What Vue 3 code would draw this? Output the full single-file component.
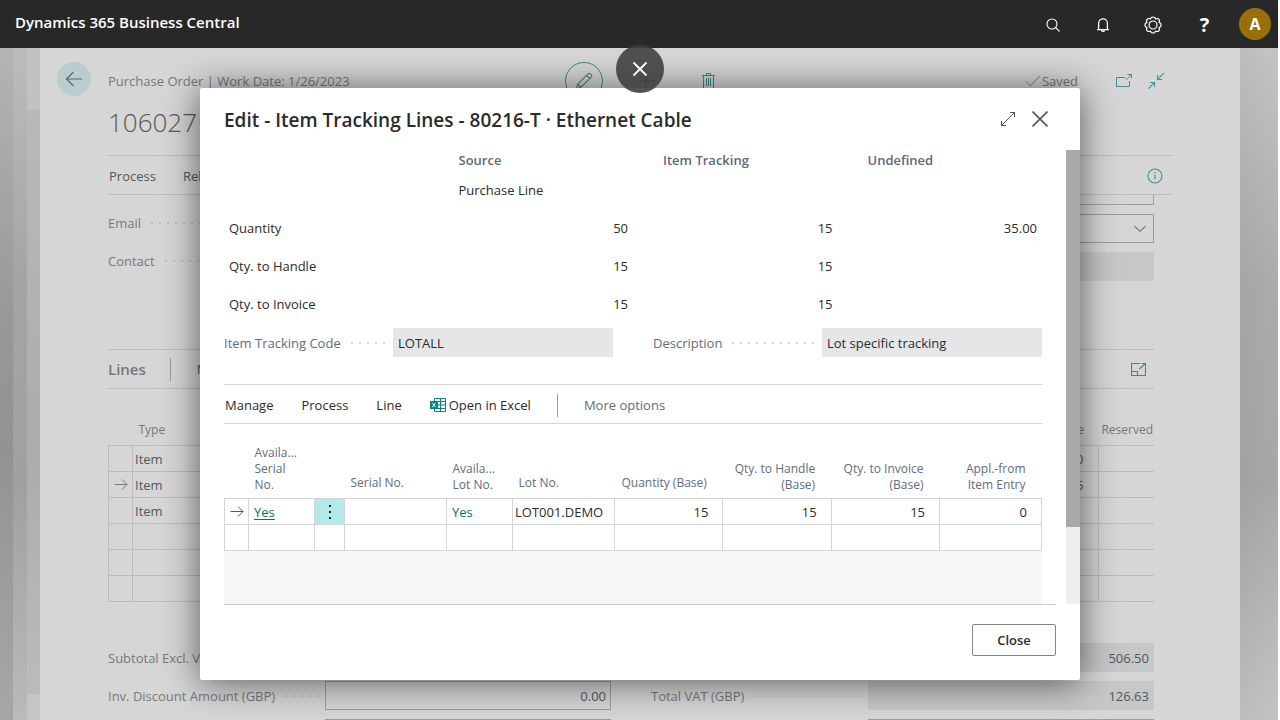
<script setup>
const summaryRows = [
  { label: 'Quantity', source: '50', tracking: '15', undefinedQty: '35.00' },
  { label: 'Qty. to Handle', source: '15', tracking: '15', undefinedQty: '' },
  { label: 'Qty. to Invoice', source: '15', tracking: '15', undefinedQty: '' },
]

const orderLines = [
  { type: 'Item', value: '10', current: false },
  { type: 'Item', value: '15', current: true },
  { type: 'Item', value: '', current: false },
  { type: '', value: '', current: false },
  { type: '', value: '', current: false },
  { type: '', value: '', current: false },
]
</script>

<template>
  <div class="app">
    <header class="topbar">
      <span class="brand">Dynamics 365 Business Central</span>
      <nav class="topbar-tools">
        <button class="tool" aria-label="Search">
          <svg width="16" height="16" viewBox="0 0 16 16" fill="none" stroke="#fff" stroke-width="1.1">
            <circle cx="7" cy="7" r="5" /><path d="M10.7 10.7 14.5 14.5" />
          </svg>
        </button>
        <button class="tool" aria-label="Notifications">
          <svg width="16" height="16" viewBox="0 0 16 16" fill="none" stroke="#fff" stroke-width="1.3">
            <path d="M3.6 12.4V6.2a4.4 4.4 0 0 1 8.8 0v6.2M2 12.6h12M6.5 13a1.5 1.5 0 0 0 3 0" />
          </svg>
        </button>
        <button class="tool" aria-label="Settings">
          <svg width="18" height="18" viewBox="0 0 18 18" fill="none" stroke="#fff" stroke-width="1.2">
            <path d="M7.2 1.600Q9 .4 10.800 1.600L11.500 2.900 13 2.500Q15.500 2.600 15.500 5L15.100 6.500 16.400 7.200Q17.600 9 16.400 10.800L15.100 11.500 15.500 13Q15.500 15.500 13 15.500L11.500 15.100 10.800 16.400Q9 17.600 7.200 16.400L6.500 15.100 5 15.500Q2.500 15.500 2.500 13L2.900 11.500 1.600 10.800Q.4 9 1.600 7.200L2.900 6.500 2.500 5Q2.500 2.500 5 2.500L6.500 2.900Z" />
            <circle cx="9" cy="9" r="4" />
          </svg>
        </button>
        <button class="tool help" aria-label="Help">?</button>
        <button class="avatar" aria-label="Account">A</button>
      </nav>
    </header>

    <div class="workspace">
      <div class="stack stack-a"></div>
      <div class="stack stack-b"></div>
      <div class="stack stack-c"></div>

      <main class="page">
        <button class="back" aria-label="Back">
          <svg width="18" height="18" viewBox="0 0 18 18" fill="none" stroke="#5f6668" stroke-width="1.2">
            <path d="M17 9H1.5M8.5 2 1.5 9l7 7" />
          </svg>
        </button>

        <div class="document">
          <div class="doc-head">
            <span class="crumb">Purchase Order | Work Date: 1/26/2023</span>
            <div class="doc-actions">
              <button class="round" aria-label="Edit">
                <svg width="20" height="20" viewBox="0 0 20 20" fill="none" stroke="#3d888b" stroke-width="1.1">
                  <path d="M2.5 17.5 3.8 13 14 2.8a1.6 1.6 0 0 1 2.3 0l1 1a1.6 1.6 0 0 1 0 2.3L7 16.2ZM12.5 4.3l3.2 3.2M3.8 13 7 16.2" />
                </svg>
              </button>
              <button class="plain" aria-label="New">
                <svg width="18" height="18" viewBox="0 0 18 18" fill="none" stroke="#0f6a6d" stroke-width="1.4">
                  <path d="M1 9h16M9 1v16" />
                </svg>
              </button>
              <button class="plain" aria-label="Delete">
                <svg width="15" height="18" viewBox="0 0 15 18" fill="none" stroke="#3d888b" stroke-width="1">
                  <path d="M1 3.5h13M5.5 3.5v-2h4v2M2.500 3.5v13.5h10V3.5M5.500 6v8M7.500 6v8M9.500 6v8" />
                </svg>
              </button>
            </div>
            <div class="doc-status">
              <span class="saved">
                <svg width="16" height="12" viewBox="0 0 16 12" fill="none" stroke="#77797c" stroke-width="1">
                  <path d="M1 6.5 5.3 10.8 15 1" />
                </svg>
                Saved
              </span>
              <button class="plain-icon" aria-label="Open in new window">
                <svg width="16" height="14" viewBox="0 0 16 14" fill="none" stroke="#3f8f98" stroke-width="1">
                  <path d="M9.500 3.5H.5v9h13V7M10 6 15 1M11.5.5H15.500v4" />
                </svg>
              </button>
              <button class="plain-icon" aria-label="Collapse">
                <svg width="16" height="16" viewBox="0 0 16 16" fill="none" stroke="#3f8f98" stroke-width="1.1">
                  <path d="M15.7.3 9.8 6.2M9.5 2v4.500H14M.3 15.7 6.4 9.6M2 9.5h4.5V14" />
                </svg>
              </button>
            </div>
          </div>

          <h1 class="doc-title">106027</h1>

          <div class="doc-menu">
            <button class="menu-item">Process</button>
            <button class="menu-item">Release</button>
            <button class="plain-icon info" aria-label="Details">
              <svg width="16" height="16" viewBox="0 0 16 16" fill="none" stroke="#3f8f98" stroke-width="1.1">
                <circle cx="8" cy="8" r="7" /><path d="M8 6.8v4.6M8 4.3v1.3" />
              </svg>
            </button>
          </div>

          <div class="doc-body">
            <section class="general">
              <div class="form-column contact-column">
                <label class="field-label" for="email">Email<i class="dots"></i></label>
                <input id="email" class="box" />
                <label class="field-label" for="contact">Contact<i class="dots"></i></label>
                <input id="contact" class="box" />
              </div>
              <div class="form-column">
                <input class="box cut" aria-label="Vendor order" />
                <div class="select-wrap">
                  <select class="box" aria-label="Purchaser"><option></option></select>
                  <svg width="12" height="8" viewBox="0 0 12 8" fill="none" stroke="#77787a" stroke-width="1.1">
                    <path d="M.5 1 6 6.5 11.500 1" />
                  </svg>
                </div>
                <input class="box filled" readonly aria-label="Status" />
              </div>
            </section>

            <div class="lines-head">
              <h2>Lines</h2>
              <span class="rule"></span>
              <button class="menu-item">Manage</button>
              <button class="plain-icon expand" aria-label="Expand lines">
                <svg width="15" height="13" viewBox="0 0 15 13" fill="none" stroke="#3d888b" stroke-width="1.1">
                  <path d="M9 .5H.5v12h14V5M.5 8.500h6v4M8.300 6 14 1M10.500.5h4v4" />
                </svg>
              </button>
            </div>

            <table class="order-lines">
              <colgroup><col class="c-mark" /><col /><col /><col class="c-last" /></colgroup>
              <thead>
                <tr><th></th><th class="left">Type</th><th class="num">Due Date</th><th class="num tight">Reserved</th></tr>
              </thead>
              <tbody>
                <tr v-for="(line, i) in orderLines" :key="i">
                  <td class="mark">
                    <svg v-if="line.current" width="14" height="12" viewBox="0 0 14 12" fill="none" stroke="#77787a" stroke-width="1">
                      <path d="M.5 5.500h12.500M8 .5l5 5-5 5" />
                    </svg>
                  </td>
                  <td class="type">{{ line.type }}</td>
                  <td class="num">{{ line.value }}</td>
                  <td></td>
                </tr>
              </tbody>
            </table>

            <section class="totals">
              <div class="form-column">
                <label class="field-label" for="sub">Subtotal Excl. VAT<i class="dots"></i></label>
                <input id="sub" class="box filled" readonly />
                <label class="field-label" for="disc">Inv. Discount Amount (GBP)<i class="dots"></i></label>
                <input id="disc" class="box" value="0.00" />
                <input class="box" aria-label="Invoice discount percent" />
              </div>
              <div class="form-column">
                <input class="box filled" readonly value="506.50" aria-label="Total Excl. VAT" />
                <label class="field-label" for="vat">Total VAT (GBP)<i class="dots"></i></label>
                <input id="vat" class="box filled" readonly value="126.63" />
                <input class="box" aria-label="Total including VAT" />
              </div>
            </section>
          </div>
        </div>
      </main>
      <div class="edge"></div>
    </div>

    <div class="overlay">
      <section class="dialog" role="dialog" aria-labelledby="dialog-title">
        <header class="dialog-head">
          <h2 id="dialog-title">Edit - Item Tracking Lines - 80216-T · Ethernet Cable</h2>
          <button class="plain-icon" aria-label="Maximize">
            <svg width="16" height="16" viewBox="0 0 16 16" fill="none" stroke="#555" stroke-width="1">
              <path d="M1 15 15 1M10 1.500h4.500V6M1.500 10v4.500H6" />
            </svg>
          </button>
          <button class="plain-icon" aria-label="Close dialog">
            <svg width="16" height="16" viewBox="0 0 16 16" fill="none" stroke="#555" stroke-width="1.6">
              <path d="M.5.5 15.500 15.500M15.500.5.5 15.500" />
            </svg>
          </button>
        </header>

        <div class="dialog-scroll">
          <div class="dialog-body">
            <table class="summary">
              <thead>
                <tr><th></th><th>Source</th><th>Item Tracking</th><th>Undefined</th></tr>
              </thead>
              <tbody>
                <tr class="kind"><td></td><td class="text">Purchase Line</td><td></td><td></td></tr>
                <tr v-for="row in summaryRows" :key="row.label">
                  <td class="name">{{ row.label }}</td>
                  <td>{{ row.source }}</td>
                  <td>{{ row.tracking }}</td>
                  <td>{{ row.undefinedQty }}</td>
                </tr>
              </tbody>
            </table>

            <div class="codes">
              <label class="field-label" for="code">Item Tracking Code<i class="dots"></i></label>
              <input id="code" readonly value="LOTALL" />
              <label class="field-label other" for="desc">Description<i class="dots"></i></label>
              <input id="desc" readonly value="Lot specific tracking" />
            </div>

            <div class="actions">
              <button class="menu-item">Manage</button>
              <button class="menu-item">Process</button>
              <button class="menu-item">Line</button>
              <button class="menu-item excel">
                <svg width="16" height="14" viewBox="0 0 16 14" fill="none" stroke="#0a8387" stroke-width="1">
                  <path d="M4.500 3V.5h11v13h-11V11M4.500 3.500h11M4.500 7h11M4.500 10.500h11M10.500.5v13" />
                  <path d="M0 3h8v8H0z" fill="#0a8387" stroke="none" />
                  <path d="M2.300 4.800 5.500 9.200M5.500 4.800 2.300 9.200" stroke="#fff" />
                </svg>
                Open in Excel
              </button>
              <span class="rule"></span>
              <button class="menu-item more">More options</button>
            </div>

            <table class="tracking">
              <colgroup>
                <col class="w-mark" /><col class="w-short" /><col class="w-dots" /><col class="w-mid" /><col class="w-short" />
                <col class="w-mid" /><col /><col /><col /><col class="w-mid" />
              </colgroup>
              <thead>
                <tr>
                  <th></th>
                  <th>Availa...<br />Serial<br />No.</th>
                  <th></th>
                  <th class="single">Serial No.</th>
                  <th>Availa...<br />Lot No.</th>
                  <th class="single">Lot No.</th>
                  <th class="num single">Quantity (Base)</th>
                  <th class="num">Qty. to Handle<br />(Base)</th>
                  <th class="num">Qty. to Invoice<br />(Base)</th>
                  <th class="num">Appl.-from<br />Item Entry</th>
                </tr>
              </thead>
              <tbody>
                <tr>
                  <td class="mark">
                    <svg width="14" height="12" viewBox="0 0 14 12" fill="none" stroke="#555" stroke-width="1">
                      <path d="M.5 5.500h12.500M8 .5l5 5-5 5" />
                    </svg>
                  </td>
                  <td><a class="current" href="#">Yes</a></td>
                  <td class="menu">
                    <button aria-label="Row menu">
                      <svg width="4" height="16" viewBox="0 0 4 16" fill="#222">
                        <path d="M1 1h2v2H1zM1 7h2v2H1zM1 13h2v2H1z" />
                      </svg>
                    </button>
                  </td>
                  <td></td>
                  <td><a href="#">Yes</a></td>
                  <td class="lot">LOT001.DEMO</td>
                  <td class="num">15</td>
                  <td class="num">15</td>
                  <td class="num">15</td>
                  <td class="num">0</td>
                </tr>
                <tr><td v-for="n in 10" :key="n"></td></tr>
              </tbody>
            </table>
            <div class="filler"></div>
          </div>
          <div class="scrollbar"><div class="thumb"></div></div>
        </div>

        <footer class="dialog-foot">
          <button class="close">Close</button>
        </footer>
      </section>

      <button class="dismiss" aria-label="Dismiss">
        <svg width="16" height="16" viewBox="0 0 16 16" fill="none" stroke="#fff" stroke-width="1.8">
          <path d="M1.500 1.500 14.500 14.500M14.500 1.500 1.500 14.500" />
        </svg>
      </button>
    </div>
  </div>
</template>

<style>
body {
  margin: 0;
  background: #fff;
}
</style>

<style scoped>
.app {
  position: relative;
  display: flex;
  flex-direction: column;
  height: 100vh;
  padding-right: 2px;
  box-sizing: border-box;
  overflow: hidden;
  font-family: "Open Sans", "Noto Sans", sans-serif;
  font-size: 13px;
  line-height: 18px;
  color: #2b2b2b;
}
button, input, select {
  font: inherit;
  color: inherit;
  margin: 0;
  padding: 0;
  border: 0;
  border-radius: 0;
  background: none;
  box-sizing: border-box;
  min-width: 0;
}
svg {
  display: block;
  flex: none;
}
table {
  width: 100%;
  border-collapse: collapse;
  table-layout: fixed;
}
th, td {
  padding: 0;
  font-weight: 400;
  white-space: nowrap;
}

.topbar {
  display: flex;
  align-items: center;
  justify-content: space-between;
  flex: 0 0 48px;
  padding: 0 7px 0 15px;
  background: #282828;
  color: #fff;
}
.brand {
  font-size: 15px;
  font-weight: 600;
  padding-bottom: 4px;
}
.topbar-tools {
  display: flex;
  align-items: center;
}
.tool {
  display: flex;
  align-items: center;
  justify-content: center;
  width: 50px;
  height: 48px;
  padding-top: 2px;
}
.help {
  width: 53px;
  font-size: 20px;
  font-weight: 700;
}
.avatar {
  width: 32px;
  height: 32px;
  margin-left: 8px;
  border-radius: 50%;
  background: #986f0b;
  font-size: 16px;
  font-weight: 700;
}

.workspace {
  display: flex;
  flex: 1;
  min-height: 0;
}
.stack {
  flex: 0 0 13px;
}
.stack-a {
  background: linear-gradient(100deg, transparent 40%, rgba(0, 0, 0, 0.06)), linear-gradient(#b4b4b4, #989898 40%, #959595 60%, #b0b0b0);
}
.stack-b {
  flex-basis: 14px;
  background: linear-gradient(#bcbcbc, #a4a4a4 35%, #a0a0a0 65%, #bababa);
}
.stack-c {
  background: linear-gradient(#c2c2c2 0 62px, #b8baba 62px, #b0b2b2 40%, #abacac 60%, #bbb 646px, #c5c5c5 646px);
}
.edge {
  flex: 0 0 38px;
  background: linear-gradient(90deg, rgba(0, 0, 0, 0.04), transparent), linear-gradient(#c4c4c4, #acacac 35%, #a8a8a8 65%, #c4c4c4);
}

.page {
  flex: 1;
  display: grid;
  grid-template-columns: 34px minmax(0, 1fr);
  column-gap: 17px;
  align-items: start;
  padding: 14px 68px 0 17px;
  background: #d6d6d6;
  color: #55565a;
  overflow: hidden;
}
.back {
  display: flex;
  align-items: center;
  justify-content: center;
  width: 34px;
  height: 34px;
  border-radius: 50%;
  background: #bacccd;
}
.doc-head {
  display: grid;
  grid-template-columns: 1fr auto 1fr;
  align-items: center;
  height: 38px;
}
.crumb, .saved {
  color: #75767b;
}
.doc-actions {
  display: flex;
  gap: 24px;
  padding-left: 12px;
}
.round, .plain {
  display: flex;
  align-items: center;
  justify-content: center;
  width: 38px;
  height: 38px;
}
.round {
  border: 1px solid #3d888b;
  border-radius: 50%;
}
.doc-status {
  display: flex;
  align-items: center;
  justify-content: flex-end;
  padding-right: 8px;
}
.saved {
  display: flex;
  align-items: center;
  gap: 1px;
  margin-right: 38px;
}
.plain-icon + .plain-icon {
  margin-left: 16px;
}
.doc-title {
  margin: 0;
  height: 55px;
  padding-top: 3px;
  box-sizing: border-box;
  font-size: 26px;
  line-height: 38px;
  font-weight: 300;
}
.doc-menu {
  display: flex;
  align-items: center;
  gap: 27px;
  height: 40px;
  box-sizing: border-box;
  padding: 1px 9px 0 1px;
  border: solid #bcbcbc;
  border-width: 1px 0;
}
.info, .expand {
  margin-left: auto;
}
.doc-body {
  padding-right: 18px;
}
.general, .totals {
  display: grid;
  grid-template-columns: 1fr 1fr;
  column-gap: 40px;
  align-items: start;
}
.form-column {
  display: grid;
  grid-template-columns: 217fr 286fr;
  row-gap: 9px;
}
.general {
  padding-bottom: 68px;
}
.contact-column {
  padding-top: 13px;
}
.form-column .box, .select-wrap {
  grid-column: 2;
}
.box {
  width: 100%;
  height: 29px;
  padding: 1px 4px 0;
  border: 1px solid #9d9d9d;
  text-align: right;
}
.cut {
  height: 10px;
  border-top: 0;
}
.filled {
  border-color: #c6c7c8;
  background: #c6c7c8;
}
.select-wrap {
  display: grid;
  align-items: center;
  justify-items: end;
}
.select-wrap > .box, .select-wrap > svg {
  grid-area: 1 / 1;
}
.select-wrap select {
  appearance: none;
}
.select-wrap svg {
  margin-right: 8px;
  pointer-events: none;
}
.field-label {
  display: flex;
  align-items: center;
  color: #77787d;
  white-space: nowrap;
}
.totals .field-label {
  padding-top: 1px;
}
.dots {
  flex: 1;
  height: 2px;
  margin: 0 6px 0 10px;
  background: repeating-linear-gradient(90deg, #bdbdbd 0 2px, transparent 2px 8px);
}
.lines-head {
  display: flex;
  align-items: center;
  height: 40px;
  padding-right: 8px;
  box-sizing: border-box;
  border: solid #bcbcbc;
  border-width: 1px 0;
}
.lines-head h2 {
  margin: 0;
  font-size: 15px;
  font-weight: 600;
  color: #75767b;
}
.rule {
  width: 1px;
  height: 23px;
  background: #99a1ab;
  margin: 0 26px;
}
.lines-head .rule {
  margin-left: 24px;
  background: #999;
}
.order-lines th {
  height: 56px;
  padding-bottom: 7px;
  box-sizing: border-box;
  vertical-align: bottom;
  font-size: 12px;
  line-height: 16px;
  color: #75767b;
}
.order-lines td {
  height: 23px;
  padding-top: 2px;
  border: 1px solid #bcbcbc;
}
.order-lines td:last-child {
  border-right: 0;
}
.order-lines .left {
  text-align: left;
  padding-left: 6px;
}
.order-lines .type {
  padding-left: 2px;
}
.order-lines .num {
  text-align: right;
  padding-right: 14px;
}
.order-lines .tight {
  padding-right: 1px;
}
.c-mark, .w-mark {
  width: 24px;
}
.c-last {
  width: 56px;
}
.mark svg {
  margin: 0 auto;
}
.totals {
  margin-top: 41px;
}

.overlay {
  position: absolute;
  inset: 88px 2px 40px 0;
  display: flex;
  justify-content: center;
  align-items: stretch;
}
.dialog {
  display: flex;
  flex-direction: column;
  width: 880px;
  max-width: 90%;
  margin-left: 2px;
  background: #fff;
  border-radius: 2px;
  box-shadow: 0 2px 36px rgba(0, 0, 0, 0.6);
}
.dialog-head {
  display: flex;
  align-items: center;
  height: 62px;
  padding: 0 32px 0 24px;
  box-sizing: border-box;
}
.dialog-head h2 {
  flex: 1;
  margin: 0;
  padding-top: 2px;
  font-size: 19px;
  line-height: 26px;
  font-weight: 600;
}
.dialog-scroll {
  display: flex;
  flex: 1;
  min-height: 0;
}
.dialog-body {
  flex: 1;
  min-width: 0;
  display: flex;
  flex-direction: column;
  padding: 0 24px;
  overflow: hidden;
}
.scrollbar {
  width: 14px;
  background: #eee;
}
.thumb {
  height: 83%;
  background: #a9a9a9;
}
.summary th {
  height: 20px;
  padding-left: 30px;
  text-align: left;
  font-weight: 600;
  color: #5f6878;
}
.summary td {
  height: 38px;
  padding-right: 5px;
  text-align: right;
}
.summary .kind td {
  height: 39px;
}
.summary .text {
  padding-left: 30px;
  text-align: left;
}
.summary .name {
  padding-left: 5px;
  text-align: left;
}
.codes {
  display: grid;
  grid-template-columns: 169fr 220px 209fr 220px;
  margin: 5px 0 27px;
}
.codes .field-label, .more {
  color: #626c7c;
}
.codes .dots {
  background: repeating-linear-gradient(90deg, #d4d6d9 0 2px, transparent 2px 8px);
}
.codes .other {
  margin-left: 40px;
}
.codes input {
  height: 29px;
  padding: 0 5px;
  background: #e5e6e8;
}
.actions {
  display: flex;
  align-items: center;
  flex: none;
  height: 40px;
  padding: 2px 0 0 1px;
  box-sizing: border-box;
  border: solid #d2d4d8;
  border-width: 1px 0;
}
.actions .menu-item + .menu-item {
  margin-left: 28px;
}
.excel {
  display: flex;
  align-items: center;
  gap: 3px;
}
.tracking {
  flex: none;
}
.tracking th {
  height: 74px;
  padding: 0 0 5px 6px;
  box-sizing: border-box;
  vertical-align: bottom;
  text-align: left;
  font-size: 12px;
  line-height: 16px;
  color: #626c7c;
}
.tracking th.single {
  padding-bottom: 7px;
}
.tracking th.num {
  padding-right: 16px;
  text-align: right;
}
.tracking td {
  height: 23px;
  padding: 2px 0 0 5px;
  border: 1px solid #d2d4d8;
}
.tracking td.num {
  padding-right: 14px;
  text-align: right;
}
.tracking td.mark, .tracking td.menu {
  padding-left: 0;
}
.tracking td.lot {
  padding-left: 2px;
}
.tracking td.menu {
  background: #b2eaec;
}
.menu button {
  display: flex;
  justify-content: center;
  width: 100%;
}
.w-short {
  width: 66px;
}
.w-dots {
  width: 30px;
}
.w-mid {
  width: 102px;
}
a {
  color: #0b6d71;
  text-decoration: none;
}
a.current {
  text-decoration: underline;
  text-underline-offset: 2px;
}
.filler {
  flex: 1;
  background: #f6f7f9;
}
.dialog-foot {
  display: flex;
  justify-content: flex-end;
  margin: 0 24px;
  padding: 19px 0 24px;
  border-top: 1px solid #c8cacd;
}
.close {
  width: 84px;
  height: 32px;
  border: 1px solid #858585;
  border-radius: 2px;
  font-weight: 600;
}
.dismiss {
  position: absolute;
  top: -43px;
  left: calc(50% - 23px);
  display: flex;
  align-items: center;
  justify-content: center;
  width: 48px;
  height: 48px;
  border-radius: 50%;
  background: rgba(64, 64, 66, 0.9);
}
</style>
